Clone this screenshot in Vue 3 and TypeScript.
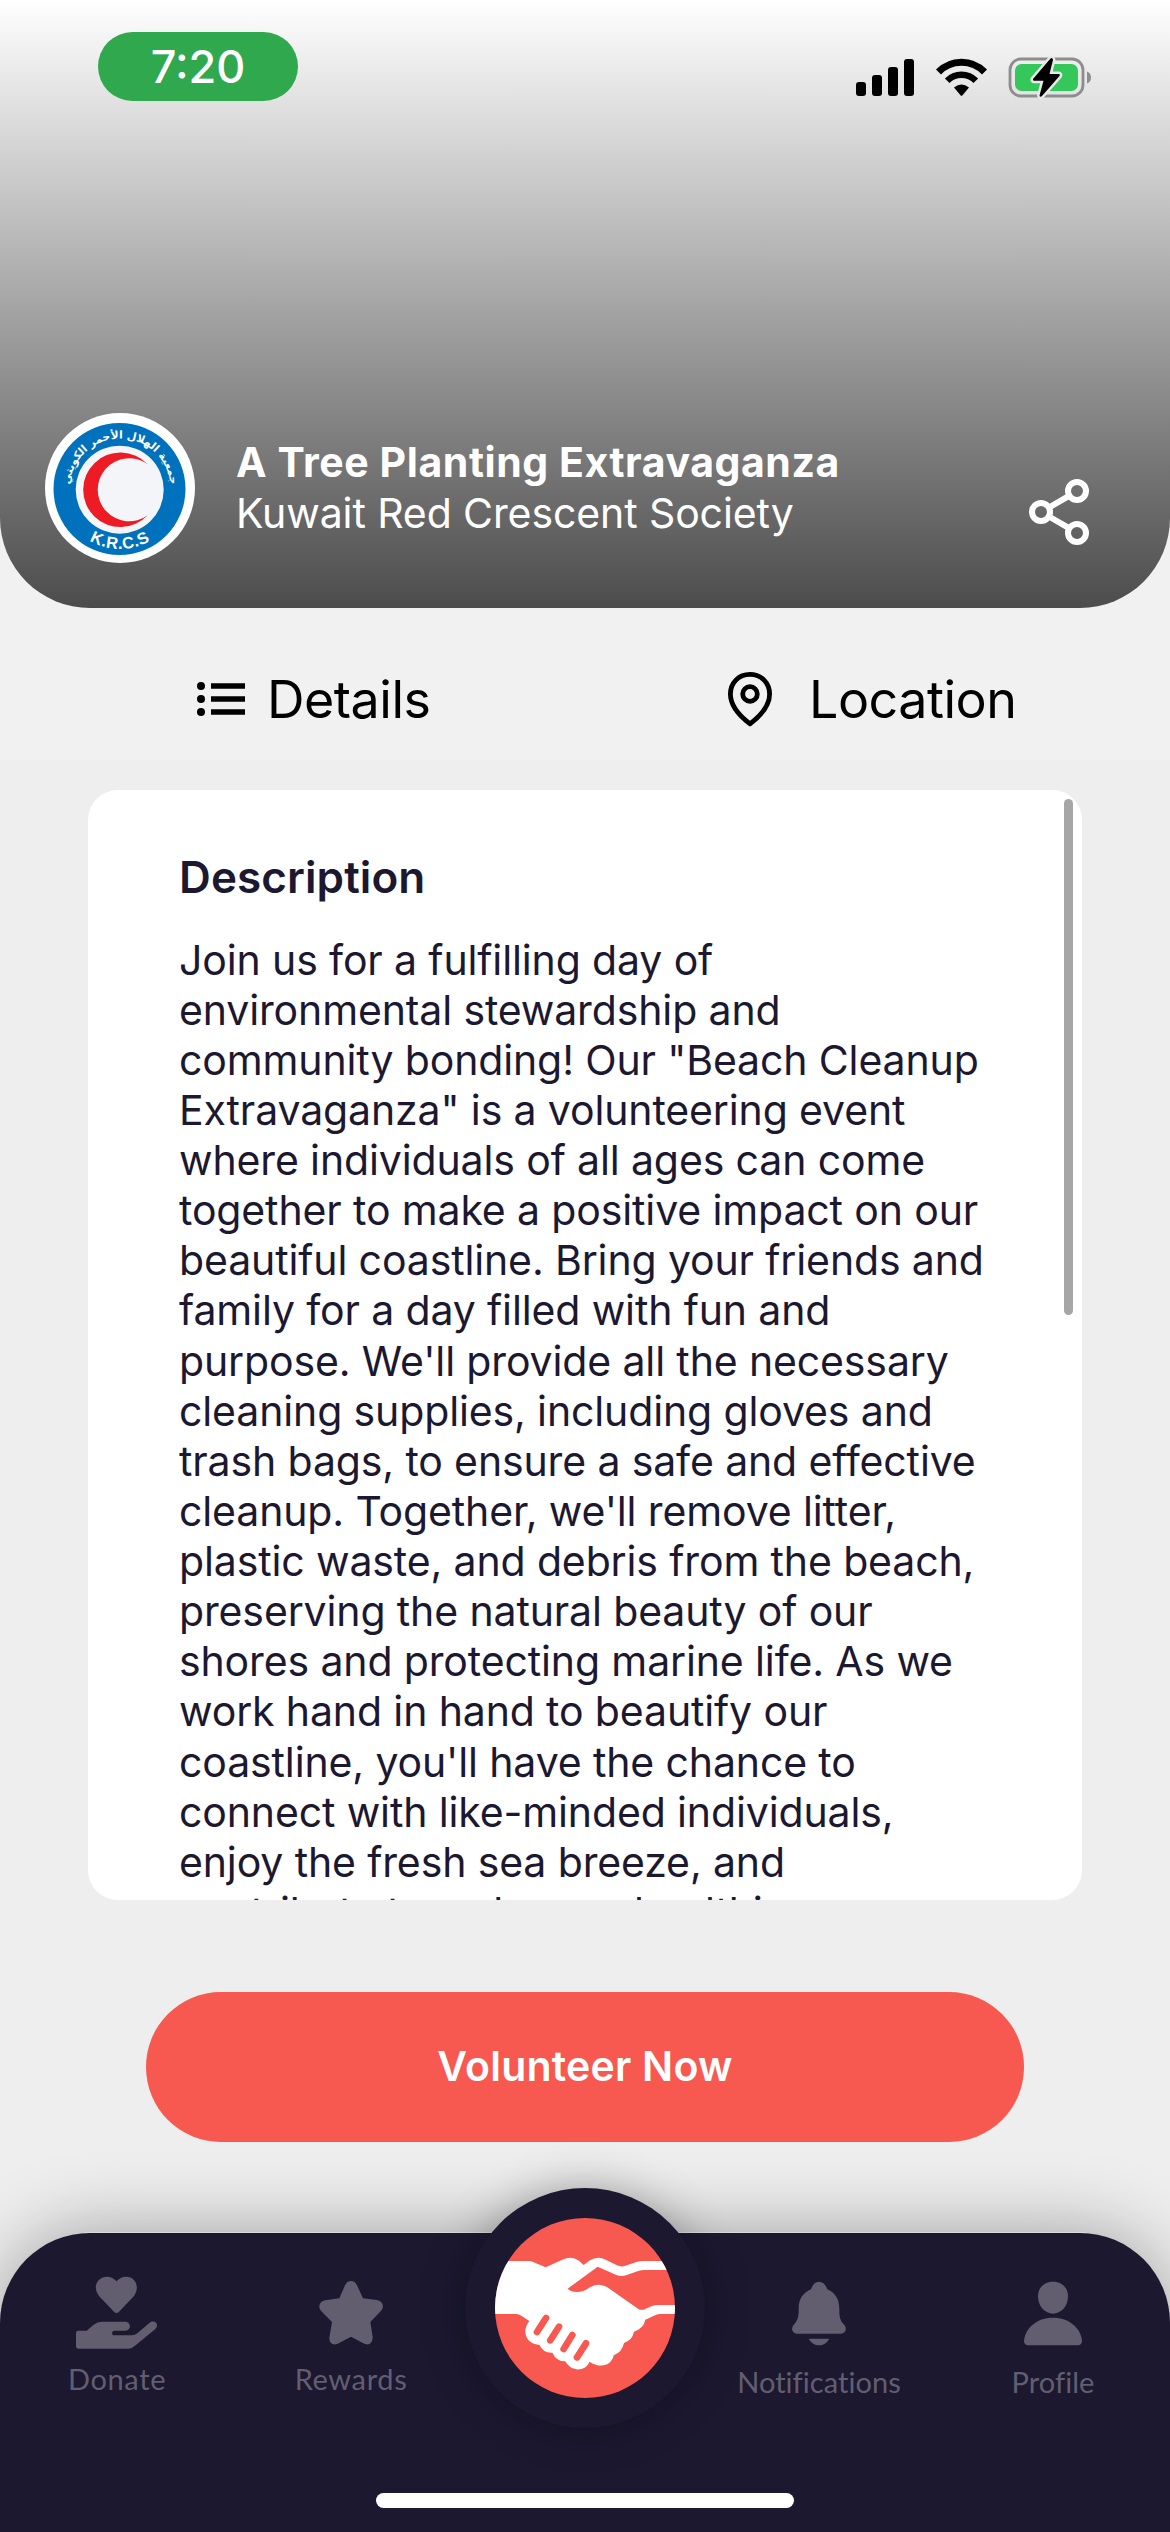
<script setup lang="ts">
interface Line {
  text: string
}

const description: Line[] = [
  'Join us for a fulfilling day of',
  'environmental stewardship and',
  'community bonding! Our "Beach Cleanup',
  'Extravaganza" is a volunteering event',
  'where individuals of all ages can come',
  'together to make a positive impact on our',
  'beautiful coastline. Bring your friends and',
  'family for a day filled with fun and',
  "purpose. We'll provide all the necessary",
  'cleaning supplies, including gloves and',
  'trash bags, to ensure a safe and effective',
  "cleanup. Together, we'll remove litter,",
  'plastic waste, and debris from the beach,',
  'preserving the natural beauty of our',
  'shores and protecting marine life. As we',
  'work hand in hand to beautify our',
  "coastline, you'll have the chance to",
  'connect with like-minded individuals,',
  'enjoy the fresh sea breeze, and',
  'contribute to a cleaner, healthier',
].map((text) => ({ text }))
</script>

<template>
  <main class="screen">
    <header class="hero">
      <div class="status">
        <div class="clock">7:20</div>
        <svg class="indicators" width="240" height="44" viewBox="0 0 240 44">
          <rect x="1" y="26" width="10" height="14" rx="3" />
          <rect x="17" y="19" width="10" height="21" rx="3" />
          <rect x="33" y="11" width="10" height="29" rx="3" />
          <rect x="49" y="3" width="10" height="37" rx="3" />
          <g fill="none" stroke="#000">
            <path d="M83.500 16 A32 32 0 0 1 129.500 16" stroke-width="7" />
            <path d="M92.200 24.700 A20 20 0 0 1 120.800 24.700" stroke-width="6.500" />
          </g>
          <path d="M99 31.500 Q106.500 25.500 114 31.500 L107.500 39.300 Q106.500 40.300 105.500 39.300 Z" />
          <rect x="155" y="3" width="73" height="37" rx="11" fill="none" stroke="#8d8d8d" stroke-width="2.800" />
          <path d="M232 15.500 Q236 17 236 21.500 Q236 26 232 27.500 Z" fill="#8d8d8d" />
          <rect x="160" y="8" width="63" height="27" rx="6.500" fill="#34c759" />
          <path
            d="M195.500 2.500 L178 23 Q177.500 24.600 179 24.700 H188.500 L184.500 39.500 Q185 41.800 187 40 L204.500 20 Q205.500 18.200 203.500 18 H194.500 L198 4 Q197.500 1 195.500 2.500 Z"
            stroke="#e9e9e9"
            stroke-width="5"
            paint-order="stroke"
          />
        </svg>
      </div>

      <div class="org">
        <svg class="logo" width="150" height="150" viewBox="15 13 150 150">
          <defs>
            <path id="arc-top" d="M46.300 114.300 A50.500 50.500 0 1 1 133.700 114.300" />
            <path id="arc-bottom" d="M31 90 A59 59 0 0 0 149 90" />
          </defs>
          <circle cx="90" cy="88" r="75" fill="#fff" />
          <circle cx="89.500" cy="89" r="66" fill="#0071bc" />
          <circle cx="89.700" cy="89.700" r="44" fill="#f4f5f9" />
          <path d="M117.700 64.300 A37.300 37.300 0 1 0 117.700 115.300 A31.500 31.500 0 1 1 117.700 64.300 Z" fill="#ed1c24" />
          <text class="logo-ar" text-anchor="middle">
            <textPath href="#arc-top" startOffset="50%">جمعية الهلال الأحمر الكويتي</textPath>
          </text>
          <text class="logo-en" text-anchor="middle">
            <textPath href="#arc-bottom" startOffset="50%">K.R.C.S</textPath>
          </text>
        </svg>
        <div class="org-text">
          <h1>A Tree Planting Extravaganza</h1>
          <p>Kuwait Red Crescent Society</p>
        </div>
        <svg class="share" width="62" height="68" viewBox="0 0 62 68" fill="none" stroke="#fff" stroke-width="6">
          <circle cx="49" cy="13" r="9" />
          <circle cx="13" cy="34" r="9" />
          <circle cx="49" cy="55" r="9" />
          <path d="M21 29.500 L41 17.800 M21 38.500 L41 50.200" />
        </svg>
      </div>
    </header>

    <nav class="tabs">
      <div class="tab tab-details">
        <svg width="48" height="36" viewBox="0 0 48 36">
          <circle cx="4" cy="5" r="4" />
          <circle cx="4" cy="18" r="4" />
          <circle cx="4" cy="31" r="4" />
          <path d="M14 5 H48 M14 18 H48 M14 31 H48" stroke="#000" stroke-width="5.600" />
        </svg>
        <span>Details</span>
      </div>
      <div class="tab tab-location">
        <svg width="46" height="56" viewBox="0 0 46 56" fill="none" stroke="#000" stroke-width="4.800" stroke-linejoin="round">
          <path d="M23 3.400 C11.500 3.400 3.400 12 3.400 23 C3.400 34.500 12 44.500 23 52.800 C34 44.500 42.600 34.500 42.600 23 C42.600 12 34.500 3.400 23 3.400 Z" />
          <circle cx="23" cy="23" r="7.300" />
        </svg>
        <span>Location</span>
      </div>
    </nav>

    <section class="card">
      <h2>Description</h2>
      <p>
        <span v-for="line in description" :key="line.text" class="line">{{ line.text }}</span>
      </p>
      <i class="scrollbar"></i>
    </section>

    <button class="cta" type="button">Volunteer Now</button>

    <footer class="bar">
      <div class="item wide">
        <svg width="82" height="74" viewBox="228 229 246 222">
          <path d="M349.500 340 Q346 340 342 336 L297 289 C274 258 296 231 321 231 Q338 231 349.500 245 Q361 231 379 231 C404 231 422 260 402 289 L357 336 Q353 340 349.500 340 Z" />
          <path d="M235 393 H260 L280 376 Q292 366 306 366 H376 C394 366 395 393 376 393 H343 C334 394 334 407 343 407 H396 Q404 407 412 401 L448 370 C463 357 480 374 466 388 L407 437 Q396 447 386 447 H235 Q228 447 228 440 V400 Q228 393 235 393 Z" />
        </svg>
        <span>Donate</span>
      </div>
      <div class="item wide">
        <svg width="64" height="74" viewBox="954 229 192 222">
          <path d="M1032 257 Q1038 244 1050 244 Q1062 244 1068 257 L1086 296 L1127 301 Q1140 303 1145 315 Q1148 325 1139 335 L1108 367 L1115 412 Q1116 425 1107 432 Q1098 437 1087 431 L1050 411 L1013 431 Q1002 437 993 432 Q984 426 985 414 L993 367 L961 335 Q952 325 956 315 Q961 303 973 302 L1015 296 Z" />
        </svg>
        <span>Rewards</span>
      </div>
      <div class="item"></div>
      <div class="item low">
        <svg width="56" height="74" viewBox="270 289 168 222">
          <path d="M330 329 Q338 306 354 306 Q370 306 379 329 C404 341 415 358 415 390 C415 413 417 422 431 437 C439 448 432 462 420 462 H288 C275 462 269 448 277 437 C291 421 293 413 293 385 C294 358 305 340 330 329 Z" />
          <path d="M323 477 H385 Q373 497 354 497 Q335 497 323 477 Z" />
        </svg>
        <span>Notifications</span>
      </div>
      <div class="item low">
        <svg width="60" height="74" viewBox="969 289 180 222">
          <path d="M1059 306 C1087 306 1104 325 1104 350 C1104 380 1083 402 1059 402 C1035 402 1014 380 1014 350 C1014 325 1031 306 1059 306 Z" />
          <path d="M985 497 Q972 496 972 484 C975 446 1010 414 1059 414 C1108 414 1143 446 1146 484 Q1146 496 1133 497 Z" />
        </svg>
        <span>Profile</span>
      </div>

      <div class="fab">
        <svg width="180" height="180" viewBox="165 174 540 540">
          <defs>
            <clipPath id="disc"><circle cx="435" cy="444" r="270" /></clipPath>
          </defs>
          <g clip-path="url(#disc)">
            <rect x="165" y="174" width="540" height="540" fill="#f7584f" />
            <path
              fill="#fff"
              d="M160 303 H266 Q274 303 281 307 L317 322 L367 299 Q395 286 417 302 L431 315 L450 301 Q473 286 497 299 L531 316 Q544 322 556 317 L589 306 Q598 303 610 303 H710 V330 H612 Q604 330 597 332 L560 345 Q544 351 529 345 L473 320 L383 386 C396 399 424 399 442 387 C463 371 483 370 502 382 L594 446 Q605 453 617 446 L634 439 Q645 435 656 435 H710 V462 H660 Q650 462 642 467 L616 479 Q612 503 582 515 Q577 540 552 549 Q546 577 521 586 C515 616 484 627 448 605 C439 633 395 639 376 604 Q350 605 337 578 Q310 580 298 554 C263 556 241 517 268 483 L244 467 Q237 462 228 462 H160 Z"
            />
            <g stroke="#f7584f" stroke-width="20" stroke-linecap="round">
              <path d="M318 474 L291 516" />
              <path d="M357 500 L331 541" />
              <path d="M397 525 L371 567" />
              <path d="M438 550 L411 592" />
            </g>
          </g>
        </svg>
      </div>
      <i class="home"></i>
    </footer>
  </main>
</template>

<style>
body {
  margin: 0;
  background: #eee;
}
</style>

<style scoped>
.screen {
  position: relative;
  z-index: 0;
  width: 1170px;
  height: 2532px;
  display: flex;
  flex-direction: column;
  overflow: hidden;
  background: #eee;
  font-family: Inter, 'Noto Sans', sans-serif;
  color: #1b1830;
}
h1,
h2,
p {
  margin: 0;
}
svg {
  display: block;
  flex: none;
}
.hero {
  flex: none;
  position: relative;
  height: 608px;
  box-sizing: border-box;
  padding: 32px 0 45px;
  border-radius: 0 0 90px 90px;
  background: linear-gradient(#fff, #4c4c4c);
  display: flex;
  flex-direction: column;
  justify-content: space-between;
}
/* backs the rounded corners with the tab strip colour */
.hero::before {
  content: '';
  position: absolute;
  inset: 300px 0 0;
  background: #f1f1f1;
  z-index: -1;
}
.status {
  display: flex;
  justify-content: space-between;
  padding: 0 75px 0 98px;
}
.clock {
  width: 200px;
  height: 69px;
  border-radius: 35px;
  background: #30a84e;
  color: #fff;
  font-size: 45px;
  font-weight: 500;
  line-height: 70px;
  text-align: center;
}
.indicators {
  margin-top: 24px;
}
.org {
  display: flex;
  align-items: center;
  padding: 0 75px 0 45px;
}
.logo-ar {
  font: 700 10.800px 'DejaVu Sans', sans-serif;
  fill: #fff;
}
.logo-en {
  font: 700 16.500px 'Liberation Sans', sans-serif;
  fill: #fff;
  letter-spacing: 0.5px;
}
.org-text {
  flex: 1;
  margin-left: 41px;
  color: #fff;
  font-size: 41px;
  letter-spacing: -0.1px;
  line-height: 51px;
}
h1 {
  font-size: 41px;
  font-weight: 700;
  letter-spacing: 0.57px;
}
.share {
  margin-top: 48px;
  margin-right: 5px;
}
.tabs {
  flex: none;
  height: 152px;
  background: #f1f1f1;
  display: flex;
  font-size: 52px;
  letter-spacing: -0.5px;
  color: #000;
}
.tab {
  display: flex;
  align-items: center;
  height: 182px;
}
.tab-details {
  width: 530px;
  padding-left: 197px;
  gap: 22px;
  box-sizing: border-box;
}
.tab-location {
  padding-left: 197px;
  gap: 36px;
}
.card {
  flex: none;
  position: relative;
  width: 994px;
  height: 1110px;
  margin: 30px 0 0 88px;
  padding: 58px 91px 0;
  box-sizing: border-box;
  border-radius: 30px;
  background: #fff;
  overflow: hidden;
}
h2 {
  font-size: 44px;
  font-weight: 600;
  line-height: 58px;
  letter-spacing: 0.1px;
}
.card p {
  margin-top: 28.500px;
  font-size: 41px;
  line-height: 50.120px;
  letter-spacing: -0.13px;
}
.line {
  display: block;
  white-space: nowrap;
}
.scrollbar {
  position: absolute;
  top: 9px;
  right: 9px;
  width: 9px;
  height: 516px;
  border-radius: 5px;
  background: #a6a6a6;
}
.cta {
  flex: none;
  width: 878px;
  height: 150px;
  margin: 92px auto 0;
  padding: 0 0 2px;
  border: 0;
  border-radius: 75px;
  background: #f7584f;
  color: #fff;
  font: 600 41px Inter, sans-serif;
  letter-spacing: 0.22px;
}
.bar {
  flex: none;
  position: relative;
  height: 299px;
  margin-top: 91px;
  border-radius: 90px 90px 0 0;
  background: #1b1830;
  box-shadow: 0 0 75px rgba(0, 0, 0, 0.34);
  display: flex;
}
.bar::before {
  content: '';
  position: absolute;
  top: -1px;
  left: 84px;
  right: 84px;
  height: 1px;
  background: #d6dad9;
}
.item {
  width: 234px;
  padding-top: 43px;
  display: flex;
  flex-direction: column;
  align-items: center;
  gap: 9px;
  font: 400 29px/40px Lato, sans-serif;
  letter-spacing: 0.05px;
  color: #625e70;
}
.wide {
  letter-spacing: 0.65px;
}
.item svg {
  fill: #625e70;
}
.low span {
  margin-top: 3px;
}
.fab {
  position: absolute;
  left: 465px;
  top: -45px;
  width: 240px;
  height: 240px;
  box-sizing: border-box;
  padding: 30px;
  border-radius: 50%;
  background: #1b1830;
  box-shadow: 0 0 45px rgba(0, 0, 0, 0.3);
}
.home {
  position: absolute;
  left: 376px;
  bottom: 24px;
  width: 418px;
  height: 15px;
  border-radius: 8px;
  background: #fff;
}
</style>
